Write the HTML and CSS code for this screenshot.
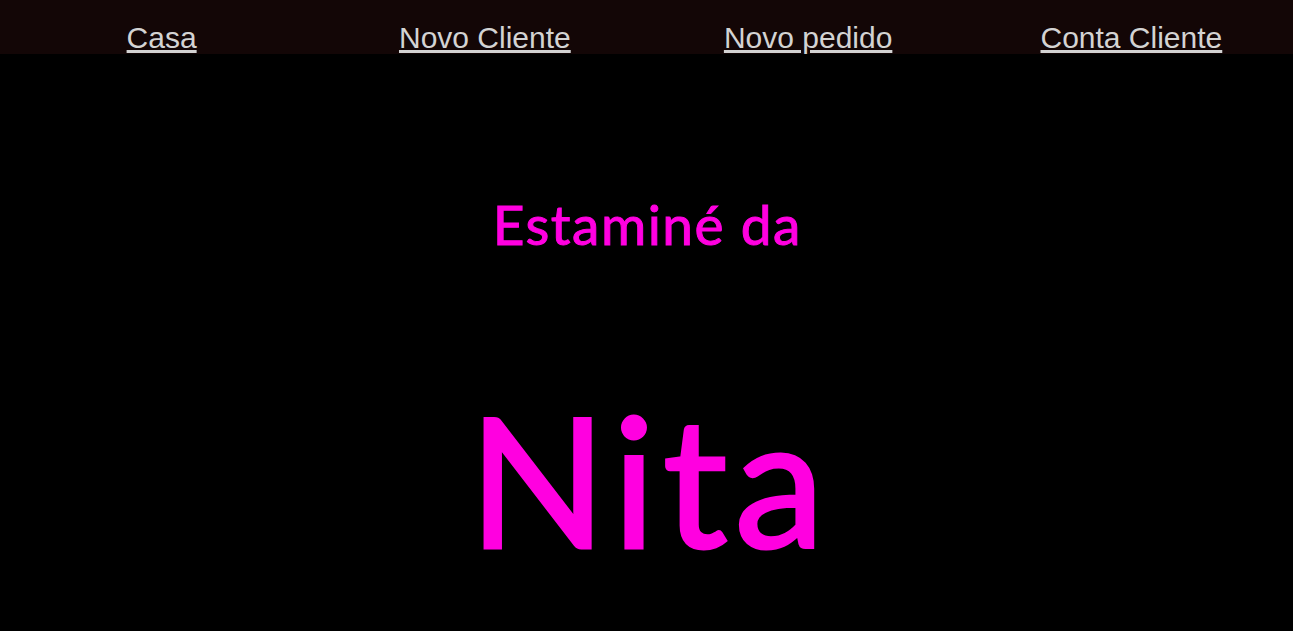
FILE: index.html
```html
<!DOCTYPE html>
<html lang="pt">
<head>
<meta charset="utf-8">
<title>Estaminé da Nita</title>
<link rel="stylesheet" href="styles.css">
</head>
<body>
<nav class="topnav">
  <a class="navlink" href="#">Casa</a>
  <a class="navlink" href="#">Novo Cliente</a>
  <a class="navlink" href="#">Novo pedido</a>
  <a class="navlink" href="#">Conta Cliente</a>
</nav>
<main class="hero">
  <h1 class="subtitle">Estaminé da</h1>
  <h2 class="name">Nita</h2>
</main>
</body>
</html>
```

FILE: styles.css
```css
html, body {
  margin: 0;
  padding: 0;
  background: #000;
  height: 100%;
}
.topnav {
  display: grid;
  grid-template-columns: repeat(4, 1fr);
  height: 54px;
  background: #130606;
  align-items: end;
}
.navlink {
  font-family: "Liberation Sans", Arial, sans-serif;
  font-size: 30px;
  color: #d3d3d3;
  text-decoration: underline;
  text-align: center;
  justify-self: center;
  line-height: 34px;
  padding-bottom: 0;
  margin-bottom: -1px;
}
.hero {
  display: flex;
  flex-direction: column;
  align-items: center;
}
.subtitle {
  font-family: Lato, "Open Sans", sans-serif;
  font-weight: 400;
  font-size: 55px;
  letter-spacing: 1.5px;
  padding-left: 1.5px;
  color: #ff00e0;
  -webkit-text-stroke: 1px #ff00e0;
  margin: 0;
  margin-top: 134px;
  line-height: 72px;
}
.name {
  font-family: Lato, "Open Sans", sans-serif;
  font-weight: 400;
  font-size: 181px;
  letter-spacing: 7px;
  padding-left: 7px;
  color: #ff00e0;
  -webkit-text-stroke: 3px #ff00e0;
  margin: 0;
  margin-top: 108px;
  line-height: 220px;
}
```
